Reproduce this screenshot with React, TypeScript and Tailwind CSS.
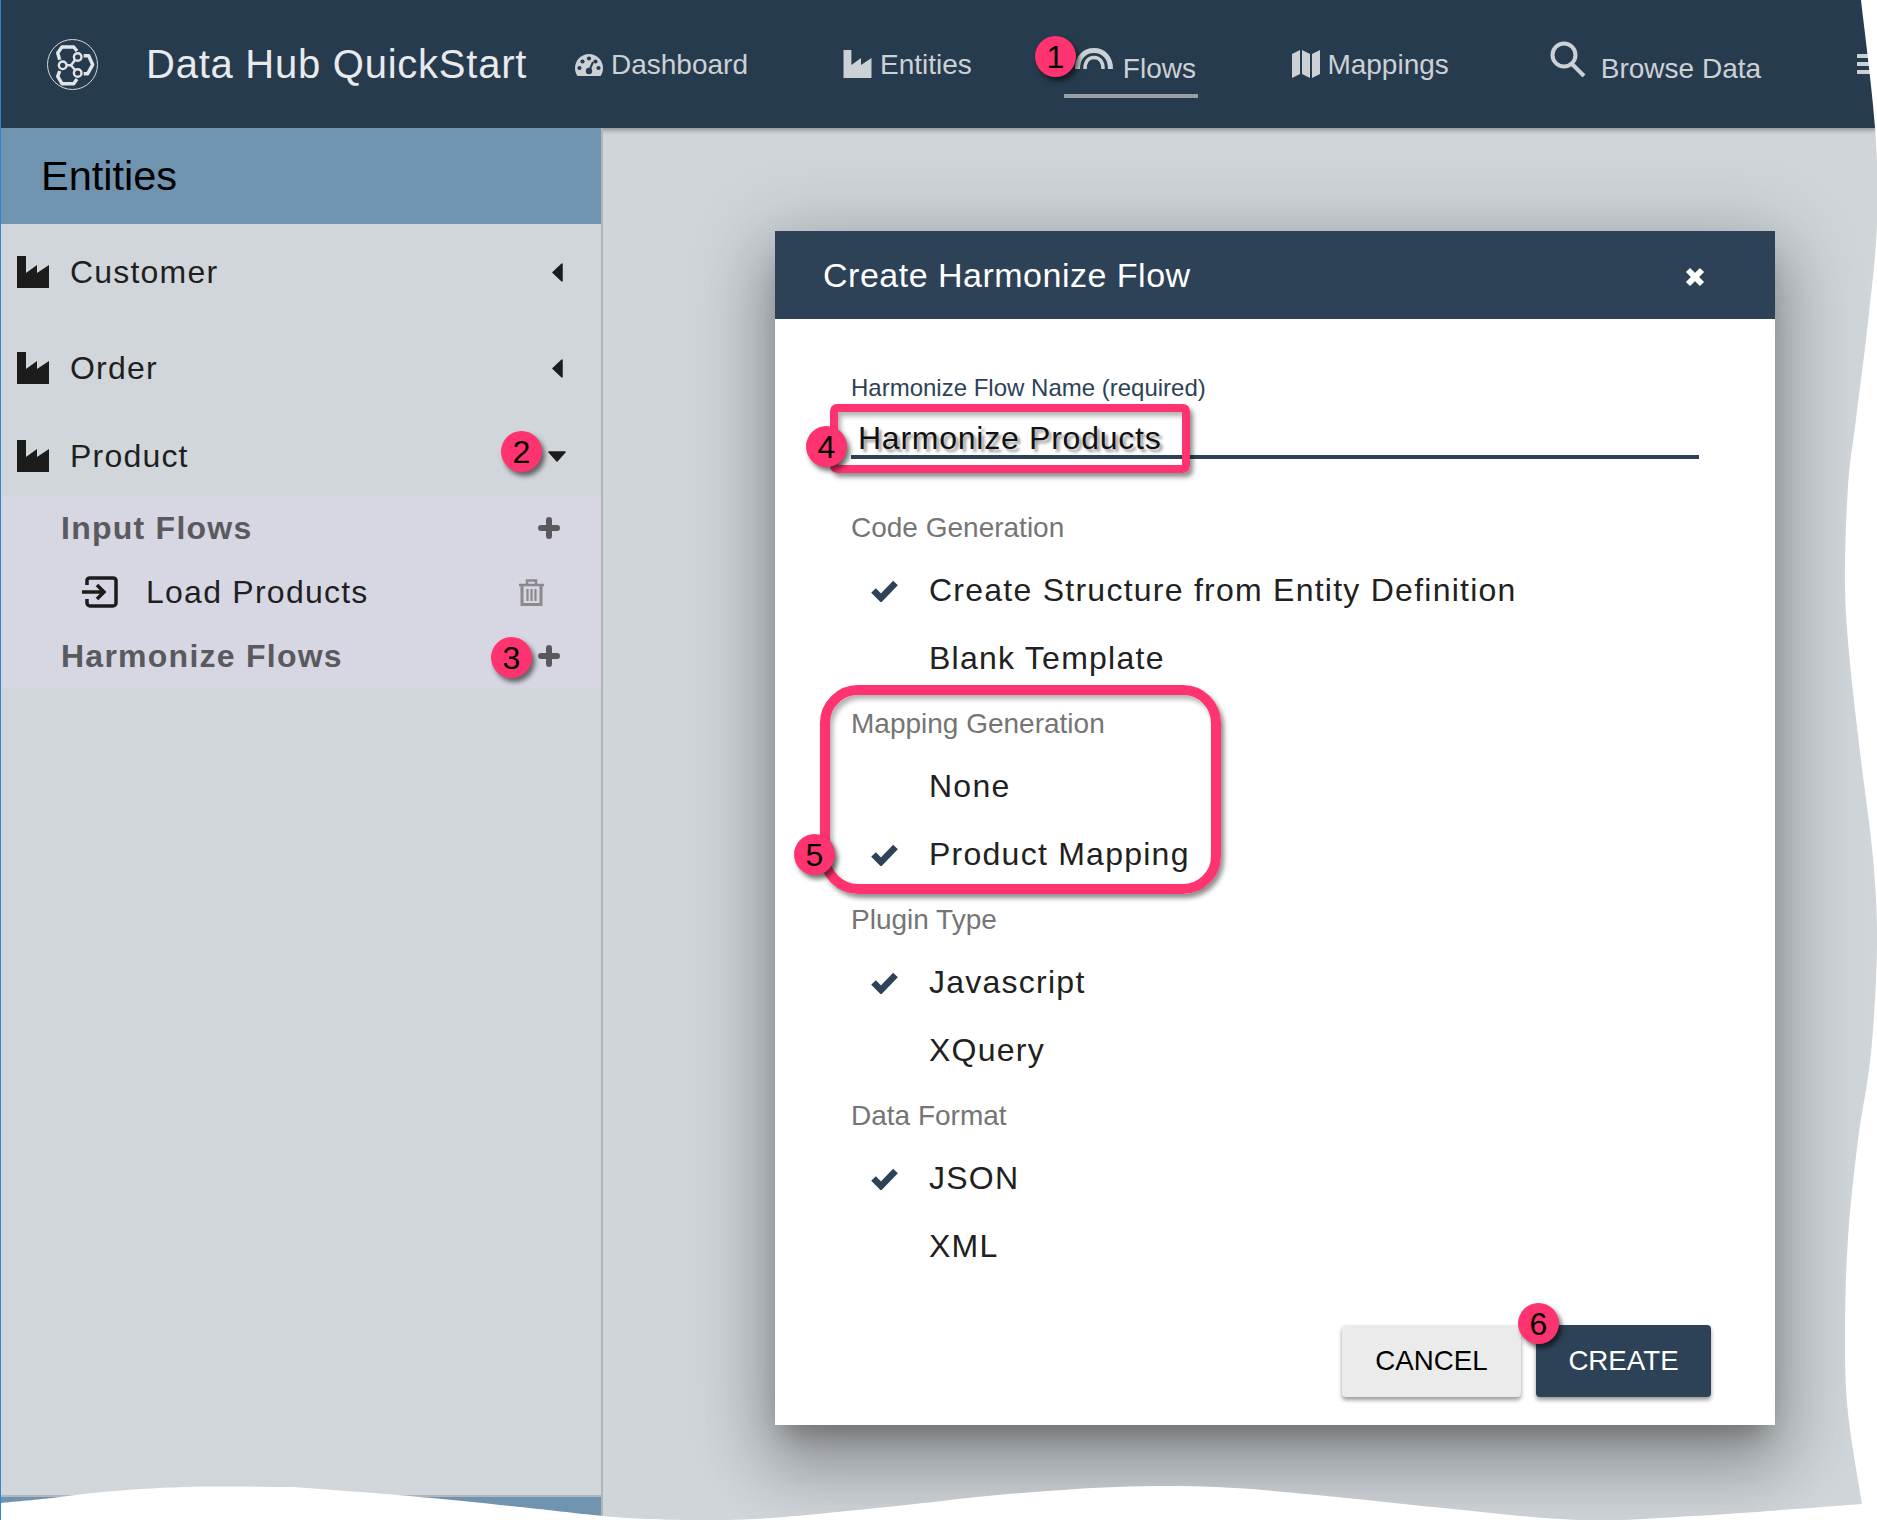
import type { ReactNode } from "react";

const tornRight = [
  [1860, 0], [1874, 127], [1876, 224], [1867, 322], [1855, 419], [1847, 487], [1844, 585], [1849, 663],
  [1860, 760], [1872, 858], [1876, 945], [1870, 1053], [1857, 1140], [1847, 1238], [1844, 1335], [1847, 1413], [1861, 1504],
];
const tornBottom = [
  [1861, 1504], [1694, 1516], [1577, 1520], [1442, 1508], [1316, 1495], [1215, 1487], [1115, 1487], [997, 1495],
  [896, 1506], [770, 1518], [700, 1520], [648, 1519], [602, 1516], [510, 1506], [408, 1496], [306, 1488],
  [280, 1487], [184, 1487], [102, 1492], [51, 1498], [0, 1503],
];

// catmull-rom through the points of the torn paper edge
function smooth(points: number[][]) {
  let d = "";
  for (let i = 0; i < points.length - 1; i++) {
    const p0 = points[i - 1] ?? points[i];
    const p1 = points[i];
    const p2 = points[i + 1];
    const p3 = points[i + 2] ?? p2;
    d += `C${p1[0] + (p2[0] - p0[0]) / 6} ${p1[1] + (p2[1] - p0[1]) / 6} ${p2[0] - (p3[0] - p1[0]) / 6} ${p2[1] - (p3[1] - p1[1]) / 6} ${p2[0]} ${p2[1]}`;
  }
  return d;
}

function TornEdge() {
  const d = `M1860 0${smooth(tornRight)}${smooth(tornBottom)}L0 1521L1878 1521L1878 0Z`;
  return (
    <svg className="absolute left-0 top-0 z-50" width="1877" height="1520" viewBox="0 0 1877 1520">
      <path d={d} fill="#ffffff" />
    </svg>
  );
}

function Logo() {
  return (
    <svg width="51" height="51" viewBox="0 0 51 51" fill="none" stroke="#e2e5e7" className="shrink-0">
      <circle cx="25.5" cy="25.5" r="25" strokeWidth="1" stroke="#d5d9dc" />
      <g strokeWidth="3.4" strokeLinejoin="round">
        <polyline points="12.7,20.7 10.7,14 15,8 26.7,8 30,12" />
        <polyline points="36.7,16.7 41.7,16.7 45.7,25.7 40.7,34.7 36.7,34.7" />
        <polyline points="12.7,32 10.7,37.3 15,44.7 26.7,44.7 30,40" />
      </g>
      <g strokeWidth="2.4">
        <path d="M19.7 26.3H24L28 21M24 26.3L28 31" />
        <circle cx="30.7" cy="18" r="3.8" />
        <circle cx="15.7" cy="26.3" r="3.8" />
        <circle cx="30.7" cy="34" r="3.8" />
      </g>
    </svg>
  );
}

function Gauge() {
  return (
    <svg width="28" height="22" viewBox="0 0 28 22" className="mt-[1px] shrink-0">
      <path d="M14 0C6 0 0 6.5 0 14C0 17 .8 19.6 2.5 22H25.5C27.2 19.6 28 17 28 14C28 6.5 22 0 14 0Z" fill="#ccd1d5" />
      <g fill="#273b4e">
        <circle cx="4.5" cy="14" r="2.1" />
        <circle cx="7.5" cy="7.5" r="2.1" />
        <circle cx="14" cy="4.5" r="2.1" />
        <circle cx="20.5" cy="7.5" r="2.1" />
        <circle cx="23.5" cy="14" r="2.1" />
        <circle cx="14" cy="17" r="3.2" />
      </g>
      <path d="M14 17L18 8" stroke="#273b4e" strokeWidth="2" />
    </svg>
  );
}

function Factory({ className }: { className: string }) {
  return (
    <svg viewBox="0 0 32 32" className={className} fill="currentColor">
      <path d="M0 0H9V17L20 9V17L32 9V32H0Z" />
    </svg>
  );
}

function Plus() {
  return (
    <svg width="22" height="22" viewBox="0 0 22 22" stroke="#5a5a5e" strokeWidth="6" strokeLinecap="round" className="shrink-0">
      <path d="M11 3V19M3 11H19" />
    </svg>
  );
}

function Check() {
  return (
    <svg width="27" height="22" viewBox="0 0 27 22" fill="none" stroke="#2d4257" strokeWidth="6.5" className="mb-[2px] block">
      <path d="M2.5 10.5L10 18L24.5 3" />
    </svg>
  );
}

function Trash() {
  return (
    <svg width="25" height="27" viewBox="0 0 25 27" fill="none" stroke="#8a8a8a" className="ml-auto shrink-0">
      <path d="M0 6H25" strokeWidth="2.5" />
      <path d="M8 6V1.5H17V6" strokeWidth="2.5" />
      <path d="M3 6V25.5H22V6" strokeWidth="3" />
      <path d="M8.5 10V22M12.5 10V22M16.5 10V22" strokeWidth="2.2" />
    </svg>
  );
}

function Badge({ className, children }: { className: string; children: ReactNode }) {
  return (
    <div className={`absolute z-40 flex h-[41px] w-[41px] items-center justify-center rounded-full bg-[#ff3370] text-[32px] text-black shadow-[3px_4px_5px_rgba(0,0,0,0.55)] ${className}`}>
      {children}
    </div>
  );
}

function NavLabel({ children }: { children: ReactNode }) {
  return <span className="whitespace-nowrap text-[28px] leading-[32px] text-[#ccd1d5]">{children}</span>;
}

function Header() {
  return (
    <header className="relative z-10 flex h-[128px] shrink-0 items-center bg-[#273b4e] pl-[46px] shadow-[0_2px_5px_rgba(0,0,0,0.35)]">
      <Logo />
      <div className="ml-[48px] w-[381px] whitespace-nowrap text-[40px] tracking-[0.75px] text-[#e8eaec]">Data Hub QuickStart</div>

      <div className="ml-[48px] flex items-center gap-[8px]">
        <Gauge />
        <div className="mt-[2px]">
          <NavLabel>Dashboard</NavLabel>
        </div>
      </div>
      <div className="ml-[95px] flex items-center gap-[8px]">
        <Factory className="h-[28px] w-[29px] text-[#ccd1d5]" />
        <div className="mt-[2px]">
          <NavLabel>Entities</NavLabel>
        </div>
      </div>

      <div className="ml-[92px] flex h-[98px] w-[135px] items-end gap-[10px] self-start border-b-4 border-[#95a0a5] pb-[9px] pl-[11px]">
        <svg width="38" height="21" viewBox="0 0 38 21" fill="none" stroke="#ccd1d5" className="mb-[16px] shrink-0">
          <path d="M2.5 21C2.5 10 9 2.5 19 2.5S35.5 10 35.5 21" strokeWidth="5" />
          <path d="M10 21C10 14 13 9.5 19 9.5S28 14 28 21" strokeWidth="3.5" />
        </svg>
        <NavLabel>Flows</NavLabel>
      </div>

      <div className="ml-[94px] flex items-center gap-[7px]">
        <svg width="28" height="28" viewBox="0 0 28 28" fill="#ccd1d5" className="shrink-0">
          <path d="M0 4L8 0V24L0 28Z" />
          <path d="M10 0L18 4V28L10 24Z" />
          <path d="M20 4L28 0V24L20 28Z" />
        </svg>
        <div className="mt-[2px]">
          <NavLabel>Mappings</NavLabel>
        </div>
      </div>

      <div className="ml-[101px] flex items-center gap-[15px]">
        <svg width="36" height="36" viewBox="0 0 36 36" fill="none" stroke="#ccd1d5" strokeWidth="4" className="mb-[10px] shrink-0">
          <circle cx="14" cy="14" r="11.5" />
          <path d="M22 23L34 35" />
        </svg>
        <div className="mt-[9px]">
          <NavLabel>Browse Data</NavLabel>
        </div>
      </div>

      <div className="ml-[96px] flex w-[20px] flex-col gap-[4px]">
        <div className="h-[4px] bg-[#ccd1d5]" />
        <div className="h-[4px] bg-[#ccd1d5]" />
        <div className="h-[4px] bg-[#ccd1d5]" />
      </div>
    </header>
  );
}

function EntityRow({ name, height, open }: { name: string; height: string; open?: boolean }) {
  return (
    <div className={`flex items-center pl-[16px] text-[32px] tracking-[1.2px] text-[#1f1f1f] ${height}`}>
      <Factory className="h-[32px] w-[32px] text-[#1c1c1c]" />
      <span className="mb-[1px] ml-[21px]">{name}</span>
      {open ? (
        <svg width="18" height="11" viewBox="0 0 18 11" className="ml-auto mr-[35px]" fill="#1c1c1c">
          <path d="M1 1H17L9 10Z" stroke="#1c1c1c" strokeWidth="1.5" strokeLinejoin="round" />
        </svg>
      ) : (
        <svg width="11" height="19" viewBox="0 0 11 19" className="ml-auto mr-[38px]" fill="#1c1c1c">
          <path d="M10 1V18L1 9.5Z" stroke="#1c1c1c" strokeWidth="1.5" strokeLinejoin="round" />
        </svg>
      )}
    </div>
  );
}

function Sidebar() {
  return (
    <aside className="relative z-20 flex w-[602px] shrink-0 flex-col border-r-2 border-[#b3b6b9] bg-[#d1d6da]">
      <div className="flex h-[96px] shrink-0 items-center bg-[#7093af] pl-[40px] pt-[1px] text-[41.5px] text-black">Entities</div>
      <EntityRow name="Customer" height="h-[96px]" />
      <EntityRow name="Order" height="h-[96px]" />
      <EntityRow name="Product" height="h-[80px]" open />
      <div className="ml-[2px] bg-[#d6d7e2]">
        <div className="flex h-[64px] items-center justify-between pl-[58px] pr-[41px] text-[32px] font-bold tracking-[1.25px] text-[#5a5a5e]">
          <span>Input Flows</span>
          <Plus />
        </div>
        <div className="flex h-[64px] items-center pl-[79px] pr-[57px] text-[32px] tracking-[1.25px] text-[#1f1f1f]">
          <svg width="36" height="32" viewBox="0 0 36 32" fill="none" stroke="#1c1c1c" strokeWidth="3.5" className="shrink-0">
            <path d="M5 9V4A3 3 0 0 1 8 2H31A3 3 0 0 1 34 4V27A3 3 0 0 1 31 30H8A3 3 0 0 1 5 27V23" />
            <path d="M0 16H22M15 9L22 16L15 23" />
          </svg>
          <span className="ml-[28px]">Load Products</span>
          <Trash />
        </div>
        <div className="flex h-[64px] items-center justify-between pl-[58px] pr-[41px] text-[32px] font-bold tracking-[1.25px] text-[#5a5a5e]">
          <span>Harmonize Flows</span>
          <Plus />
        </div>
      </div>
      <div className="flex-1 border-b-2 border-[#b3b6b9]" />
      <div className="h-[23px] shrink-0 bg-[#7093af]" />
    </aside>
  );
}

const sections = [
  { title: "Code Generation", options: [{ label: "Create Structure from Entity Definition", on: true }, { label: "Blank Template" }] },
  { title: "Mapping Generation", options: [{ label: "None" }, { label: "Product Mapping", on: true }] },
  { title: "Plugin Type", options: [{ label: "Javascript", on: true }, { label: "XQuery" }] },
  { title: "Data Format", options: [{ label: "JSON", on: true }, { label: "XML" }] },
];

function Modal() {
  return (
    <div className="ml-[172px] mt-[103px] h-[1194px] w-[1000px] bg-white shadow-[0_40px_60px_6px_rgba(0,0,0,0.2),0_14px_75px_14px_rgba(0,0,0,0.18),0_18px_24px_-10px_rgba(0,0,0,0.25)]">
      <div className="flex h-[88px] items-center justify-between bg-[#2d4257] pl-[48px] pr-[70px] text-[34px] tracking-[0.5px] text-white">
        <span className="mt-[1px]">Create Harmonize Flow</span>
        <svg width="20" height="20" viewBox="0 0 20 20" stroke="#ffffff" strokeWidth="6" className="mt-[4px]">
          <path d="M3 3L17 17M17 3L3 17" />
        </svg>
      </div>
      <div className="pl-[76px] pr-[64px] pt-[54px]">
        <div className="text-[24px] leading-[30px] text-[#2d4257]">Harmonize Flow Name (required)</div>
        <div className="mt-[15px] h-[41px] w-[848px] border-b-[4px] border-[#2d4257] pl-[7px] pt-[2px] text-[32px] leading-[36px] tracking-[0.75px] text-[#111] [text-shadow:3px_3px_3px_rgba(0,0,0,0.4)]">
          Harmonize Products
        </div>
        <div className="mt-[39px]">
          {sections.map((section) => (
            <div key={section.title}>
              <div className="flex h-[60px] items-center text-[28px] text-[#757575]">{section.title}</div>
              {section.options.map((option) => (
                <div key={option.label} className="flex h-[68px] items-center text-[32px] tracking-[1.25px] text-[#212121]">
                  <div className="w-[78px] pl-[20px]">{option.on && <Check />}</div>
                  <span className="mb-[4px]">{option.label}</span>
                </div>
              ))}
            </div>
          ))}
        </div>
        <div className="mt-[43px] flex justify-end gap-[15px]">
          <button className="h-[72px] w-[179px] rounded-[4px] bg-[#ebebeb] text-[27.7px] text-black shadow-[0_3px_4px_rgba(0,0,0,0.4)]">CANCEL</button>
          <button className="h-[72px] w-[175px] rounded-[4px] bg-[#2d4257] text-[27.7px] text-white shadow-[0_3px_4px_rgba(0,0,0,0.4)]">CREATE</button>
        </div>
      </div>
    </div>
  );
}

export default function App() {
  return (
    <div className="relative h-[1520px] w-[1877px] overflow-hidden border-l border-[#2a86d6] bg-[#d0d5d9] font-['Liberation_Sans',Arial,sans-serif]">
      <div className="flex h-full flex-col">
        <Header />
        <div className="flex min-h-0 flex-1">
          <Sidebar />
          <main className="min-w-0 flex-1">
            <Modal />
          </main>
        </div>
      </div>

      {/* callouts drawn over the screenshot */}
      <div className="absolute left-[829px] top-[404px] z-30 h-[69px] w-[360px] rounded-[7px] border-[8px] border-[#ff3370] shadow-[3px_4px_5px_rgba(0,0,0,0.45),inset_3px_4px_5px_rgba(0,0,0,0.3)]" />
      <div className="absolute left-[819px] top-[685px] z-30 h-[209px] w-[401px] rounded-[38px] border-[10px] border-[#ff3370] shadow-[3px_4px_5px_rgba(0,0,0,0.45),inset_3px_4px_5px_rgba(0,0,0,0.3)]" />
      <Badge className="left-[1034px] top-[36px]">1</Badge>
      <Badge className="left-[500px] top-[431px]">2</Badge>
      <Badge className="left-[490px] top-[637px]">3</Badge>
      <Badge className="left-[805px] top-[426px]">4</Badge>
      <Badge className="left-[793px] top-[834px]">5</Badge>
      <Badge className="left-[1517px] top-[1303px]">6</Badge>

      <TornEdge />
    </div>
  );
}
